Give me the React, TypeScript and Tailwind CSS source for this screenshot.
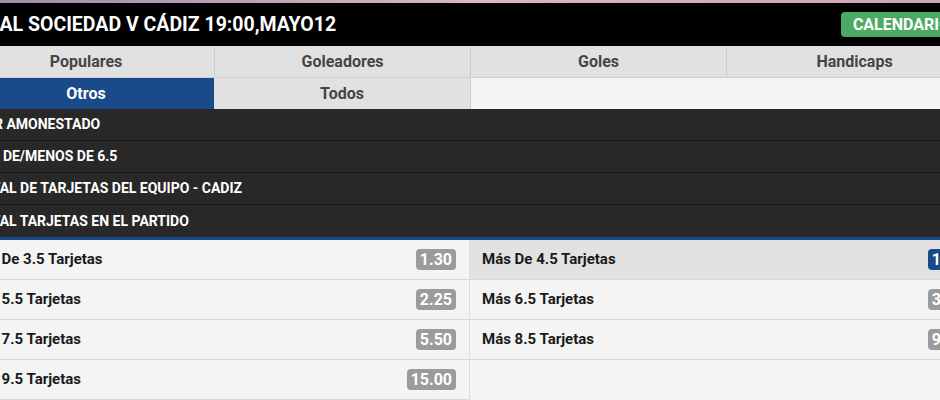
import React from "react";

const tabs1 = ["Populares", "Goleadores", "Goles", "Handicaps"];
const darkRows: [string, string][] = [
  ["1.ER AMONESTADO", ""],
  ["MÁS DE/MENOS DE 6.5", "ml-[-5px]"],
  ["TOTAL DE TARJETAS DEL EQUIPO - CADIZ", ""],
  ["TOTAL TARJETAS EN EL PARTIDO", ""],
];
const left = [
  ["Menos De 3.5 Tarjetas", "1.30"],
  ["Menos 5.5 Tarjetas", "2.25"],
  ["Menos 7.5 Tarjetas", "5.50"],
  ["Menos 9.5 Tarjetas", "15.00"],
];
const right = [
  ["Más De 4.5 Tarjetas", "1.70", true],
  ["Más 6.5 Tarjetas", "3.00", false],
  ["Más 8.5 Tarjetas", "9.00", false],
];

function Odd({ v, sel }: { v: string; sel?: boolean }) {
  return (
    <span
      className={
        "h-[21px] px-[4px] rounded-[4px] flex items-center text-[16px] font-bold text-white leading-none " +
        (sel ? "bg-[#1b4a8b]" : "bg-[#9b9b9b]")
      }
    >
      {v}
    </span>
  );
}

export default function App() {
  return (
    <div className="w-[940px] h-[400px] overflow-hidden bg-[#f4f4f4] font-['Roboto',sans-serif]">
      <div className="h-[3px] bg-gradient-to-r from-[#9d8ea6] via-[#d9b6c8] to-[#cfa3b8]" />
      <div className="ml-[-42px] w-[1024px]">
        <div className="h-[43px] bg-black flex items-center justify-between pl-[18px] pr-[20px]">
          <span className="text-white font-bold text-[19.5px]">
            REAL SOCIEDAD V CÁDIZ 19:00,MAYO12
          </span>
          <span className="h-[25px] px-[12px] rounded-[4px] bg-[#4caa64] text-white font-bold text-[16px] flex items-center">
            CALENDARIO
          </span>
        </div>
        <div className="grid grid-cols-4 h-[32px] bg-[#e1e1e1] border-b border-[#cfcfcf]">
          {tabs1.map((t, i) => (
            <div
              key={t}
              className={
                "flex items-center justify-center text-[16px] font-bold text-[#454545] " +
                (i > 0 ? "border-l border-[#cfcfcf]" : "")
              }
            >
              {t}
            </div>
          ))}
        </div>
        <div className="grid grid-cols-4 h-[31px]">
          <div className="flex items-center justify-center bg-[#1b4a8b] text-white text-[16px] font-bold">
            Otros
          </div>
          <div className="flex items-center justify-center bg-[#e1e1e1] text-[#454545] text-[16px] font-bold">
            Todos
          </div>
          <div className="col-span-2 bg-[#f4f4f4] border-l border-[#cfcfcf]" />
        </div>
        <div className="bg-[#282828]">
          {darkRows.map(([r, off], i) => (
            <div
              key={r}
              className={
                "h-[32px] flex items-center pl-[16px] text-white text-[14px] font-bold " +
                (i < 3 ? "border-b border-[#1a1a1a]" : "")
              }
            >
              <span className={off}>{r}</span>
            </div>
          ))}
        </div>
        <div className="h-[3px] bg-[#1b4a8b]" />
        <div className="grid grid-cols-2">
          <div className="border-r border-[#dcdcdc]">
            {left.map(([t, v]) => (
              <div
                key={t}
                className="h-[40px] flex items-center justify-between pl-0 pr-[13px] border-b border-[#d8d8d8]"
              >
                <span className="ml-[-6px] text-[15px] font-bold text-[#1a1a1a]">{t}</span>
                <Odd v={v} />
              </div>
            ))}
          </div>
          <div>
            {right.map(([t, v, s]) => (
              <div
                key={t as string}
                className={
                  "h-[40px] flex items-center justify-between pl-[12px] pr-[14px] border-b border-[#d8d8d8] " +
                  (s ? "bg-[#e2e2e2]" : "")
                }
              >
                <span className="text-[15px] font-bold text-[#1a1a1a]">{t as string}</span>
                <Odd v={v as string} sel={s as boolean} />
              </div>
            ))}
          </div>
        </div>
      </div>
    </div>
  );
}
